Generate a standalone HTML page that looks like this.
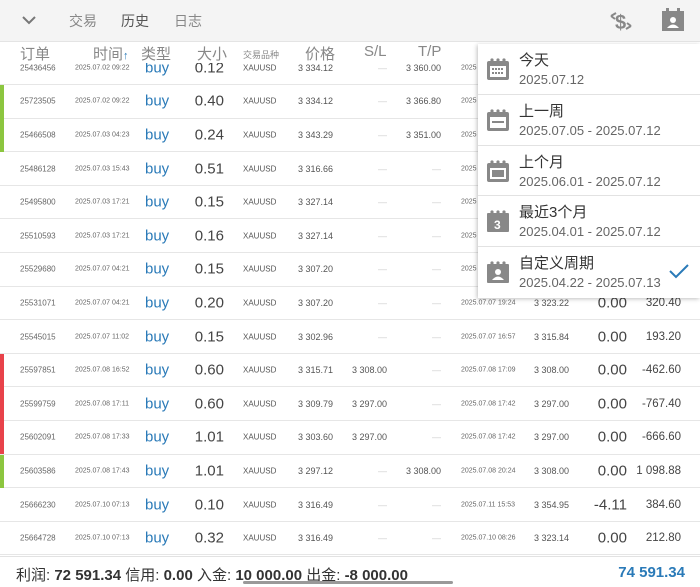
<!DOCTYPE html>
<html><head><meta charset="utf-8"><style>
*{margin:0;padding:0;box-sizing:border-box}
body{width:700px;height:587px;overflow:hidden;background:#fff;font-family:"Liberation Sans","Noto Sans CJK SC",sans-serif;color:#555;position:relative}
.top{position:absolute;left:0;top:0;width:700px;height:42px;background:#f4f4f4;border-bottom:1px solid #e4e4e4;z-index:5}
.top span{position:absolute;top:11px;font-size:14px;color:#888}
.hdr{position:absolute;left:0;top:42px;width:700px;height:21px;background:#fff;z-index:4}
.hdr span{position:absolute;top:1px;font-size:15px;color:#888;white-space:nowrap}
.row{position:absolute;left:0;width:700px;height:33.6px;border-bottom:1px solid #e6e6e6}
.row span{position:absolute;white-space:nowrap;top:50%;transform:translateY(-50%)}
.id{left:20px;font-size:8px;color:#666}
.tm{left:75px;font-size:7px;color:#666}
.ty{left:145px;font-size:15px;color:#2a7ab8}
.sz{right:476px;font-size:15px;color:#444}
.sy{left:243px;font-size:8px;color:#555}
.pr{right:367px;font-size:9px;color:#555}
.sl{right:313px;font-size:9px;color:#555}
.tp{right:259px;font-size:9px;color:#555}
.ct{left:461px;font-size:7px;color:#666}
.cp{right:131px;font-size:9px;color:#555}
.sw{right:73px;font-size:15px;color:#444}
.pf{right:19px;font-size:11.5px;color:#444}
.d{color:#ccc !important;font-size:9px}
.bar{position:absolute;left:0;width:4px}
.menu{position:absolute;left:478px;top:44px;width:222px;height:254px;background:#fff;box-shadow:-1px 1px 4px rgba(0,0,0,.25);z-index:6}
.it{position:relative;height:50.8px;border-bottom:1px solid #e2e2e2}
.it .t{position:absolute;left:41px;top:5px;font-size:15px;color:#333}
.it .dt{position:absolute;left:41px;top:28px;font-size:13px;color:#666}
.ic{position:absolute;left:8px;top:13px}
.foot{position:absolute;left:0;top:556px;width:700px;height:31px;background:#fff;border-top:1px solid #e2e2e2}
.foot span{position:absolute;top:7px;font-size:15px;color:#333;white-space:nowrap}
</style></head><body>
<div class="top">
<svg style="position:absolute;left:22px;top:15px" width="14" height="10"><path d="M1 2 L7 8 L13 2" stroke="#777" stroke-width="2" fill="none"/></svg>
<span style="left:69px">交易</span><span style="left:121px;color:#555">历史</span><span style="left:174px">日志</span>
<svg style="position:absolute;left:608px;top:8px" width="26" height="26"><text x="7" y="21" font-size="20" font-weight="bold" fill="#888" font-family="Liberation Sans">$</text><path d="M3 8 L8 5 M3 8 L7 11 M23 18 L18 21 M23 18 L19 15" stroke="#888" stroke-width="2"/></svg>
<svg style="position:absolute;left:661px;top:8px" width="24" height="24"><rect x="1" y="3" width="22" height="20" fill="#888"/><rect x="5" y="0" width="3" height="5" fill="#888"/><rect x="16" y="0" width="3" height="5" fill="#888"/><circle cx="12" cy="12" r="3" fill="#fff"/><path d="M6 20 Q12 13 18 20Z" fill="#fff"/></svg>
</div>
<div class="hdr">
<span style="left:20px">订单</span><span style="left:93px">时间<b style="color:#2a7ab8;font-size:11px">↑</b></span><span style="left:141px">类型</span><span style="left:197px">大小</span><span style="left:243px;font-size:9px;top:6px">交易品种</span><span style="left:305px">价格</span><span style="left:364px">S/L</span><span style="left:418px">T/P</span>
<svg style="position:absolute;left:127px;top:-4px" width="14" height="6"><path d="M0 6 L7 0 L14 6Z" fill="#fff"/></svg>
</div>

<div class="row" style="top:51.5px"><span class="id">25436456</span><span class="tm">2025.07.02 09:22</span><span class="ty">buy</span><span class="sz">0.12</span><span class="sy">XAUUSD</span><span class="pr">3 334.12</span><span class="sl d">—</span><span class="tp">3 360.00</span><span class="ct">2025</span></div>
<div class="row" style="top:85.1px"><span class="id">25723505</span><span class="tm">2025.07.02 09:22</span><span class="ty">buy</span><span class="sz">0.40</span><span class="sy">XAUUSD</span><span class="pr">3 334.12</span><span class="sl d">—</span><span class="tp">3 366.80</span><span class="ct">2025</span></div>
<div class="row" style="top:118.7px"><span class="id">25466508</span><span class="tm">2025.07.03 04:23</span><span class="ty">buy</span><span class="sz">0.24</span><span class="sy">XAUUSD</span><span class="pr">3 343.29</span><span class="sl d">—</span><span class="tp">3 351.00</span><span class="ct">2025</span></div>
<div class="row" style="top:152.3px"><span class="id">25486128</span><span class="tm">2025.07.03 15:43</span><span class="ty">buy</span><span class="sz">0.51</span><span class="sy">XAUUSD</span><span class="pr">3 316.66</span><span class="sl d">—</span><span class="tp d">—</span><span class="ct">2025</span></div>
<div class="row" style="top:185.9px"><span class="id">25495800</span><span class="tm">2025.07.03 17:21</span><span class="ty">buy</span><span class="sz">0.15</span><span class="sy">XAUUSD</span><span class="pr">3 327.14</span><span class="sl d">—</span><span class="tp d">—</span><span class="ct">2025</span></div>
<div class="row" style="top:219.5px"><span class="id">25510593</span><span class="tm">2025.07.03 17:21</span><span class="ty">buy</span><span class="sz">0.16</span><span class="sy">XAUUSD</span><span class="pr">3 327.14</span><span class="sl d">—</span><span class="tp d">—</span><span class="ct">2025</span></div>
<div class="row" style="top:253.1px"><span class="id">25529680</span><span class="tm">2025.07.07 04:21</span><span class="ty">buy</span><span class="sz">0.15</span><span class="sy">XAUUSD</span><span class="pr">3 307.20</span><span class="sl d">—</span><span class="tp d">—</span><span class="ct">2025</span></div>
<div class="row" style="top:286.7px"><span class="id">25531071</span><span class="tm">2025.07.07 04:21</span><span class="ty">buy</span><span class="sz">0.20</span><span class="sy">XAUUSD</span><span class="pr">3 307.20</span><span class="sl d">—</span><span class="tp d">—</span><span class="ct">2025.07.07 19:24</span><span class="cp">3 323.22</span><span class="sw">0.00</span><span class="pf">320.40</span></div>
<div class="row" style="top:320.3px"><span class="id">25545015</span><span class="tm">2025.07.07 11:02</span><span class="ty">buy</span><span class="sz">0.15</span><span class="sy">XAUUSD</span><span class="pr">3 302.96</span><span class="sl d">—</span><span class="tp d">—</span><span class="ct">2025.07.07 16:57</span><span class="cp">3 315.84</span><span class="sw">0.00</span><span class="pf">193.20</span></div>
<div class="row" style="top:353.9px"><span class="id">25597851</span><span class="tm">2025.07.08 16:52</span><span class="ty">buy</span><span class="sz">0.60</span><span class="sy">XAUUSD</span><span class="pr">3 315.71</span><span class="sl">3 308.00</span><span class="tp d">—</span><span class="ct">2025.07.08 17:09</span><span class="cp">3 308.00</span><span class="sw">0.00</span><span class="pf">-462.60</span></div>
<div class="row" style="top:387.5px"><span class="id">25599759</span><span class="tm">2025.07.08 17:11</span><span class="ty">buy</span><span class="sz">0.60</span><span class="sy">XAUUSD</span><span class="pr">3 309.79</span><span class="sl">3 297.00</span><span class="tp d">—</span><span class="ct">2025.07.08 17:42</span><span class="cp">3 297.00</span><span class="sw">0.00</span><span class="pf">-767.40</span></div>
<div class="row" style="top:421.1px"><span class="id">25602091</span><span class="tm">2025.07.08 17:33</span><span class="ty">buy</span><span class="sz">1.01</span><span class="sy">XAUUSD</span><span class="pr">3 303.60</span><span class="sl">3 297.00</span><span class="tp d">—</span><span class="ct">2025.07.08 17:42</span><span class="cp">3 297.00</span><span class="sw">0.00</span><span class="pf">-666.60</span></div>
<div class="row" style="top:454.7px"><span class="id">25603586</span><span class="tm">2025.07.08 17:43</span><span class="ty">buy</span><span class="sz">1.01</span><span class="sy">XAUUSD</span><span class="pr">3 297.12</span><span class="sl d">—</span><span class="tp">3 308.00</span><span class="ct">2025.07.08 20:24</span><span class="cp">3 308.00</span><span class="sw">0.00</span><span class="pf">1 098.88</span></div>
<div class="row" style="top:488.3px"><span class="id">25666230</span><span class="tm">2025.07.10 07:13</span><span class="ty">buy</span><span class="sz">0.10</span><span class="sy">XAUUSD</span><span class="pr">3 316.49</span><span class="sl d">—</span><span class="tp d">—</span><span class="ct">2025.07.11 15:53</span><span class="cp">3 354.95</span><span class="sw">-4.11</span><span class="pf">384.60</span></div>
<div class="row" style="top:521.9px"><span class="id">25664728</span><span class="tm">2025.07.10 07:13</span><span class="ty">buy</span><span class="sz">0.32</span><span class="sy">XAUUSD</span><span class="pr">3 316.49</span><span class="sl d">—</span><span class="tp d">—</span><span class="ct">2025.07.10 08:26</span><span class="cp">3 323.14</span><span class="sw">0.00</span><span class="pf">212.80</span></div>

<div class="bar" style="top:85px;height:67px;background:#8cc63f"></div>
<div class="bar" style="top:354px;height:100px;background:#e8424a"></div>
<div class="bar" style="top:455px;height:33px;background:#8cc63f"></div>

<div class="menu">
<div class="it"><svg class="ic" width="24" height="24"><rect x="1" y="4" width="22" height="19" rx="2" fill="#888"/><circle cx="6" cy="3" r="1.6" fill="#888"/><circle cx="12" cy="3" r="1.6" fill="#888"/><circle cx="18" cy="3" r="1.6" fill="#888"/><rect x="4" y="9" width="16" height="11" fill="#fff"/><g fill="#888"><rect x="6" y="11" width="2" height="2"/><rect x="9" y="11" width="2" height="2"/><rect x="12" y="11" width="2" height="2"/><rect x="15" y="11" width="2" height="2"/><rect x="6" y="15" width="2" height="2"/><rect x="9" y="15" width="2" height="2"/><rect x="12" y="15" width="2" height="2"/><rect x="15" y="15" width="2" height="2"/></g></svg><span class="t">今天</span><span class="dt">2025.07.12</span></div>
<div class="it"><svg class="ic" width="24" height="24"><rect x="1" y="4" width="22" height="19" rx="2" fill="#888"/><circle cx="6" cy="3" r="1.6" fill="#888"/><circle cx="12" cy="3" r="1.6" fill="#888"/><circle cx="18" cy="3" r="1.6" fill="#888"/><rect x="4" y="9" width="16" height="11" fill="#fff"/><rect x="6" y="13" width="12" height="2" fill="#888"/></svg><span class="t">上一周</span><span class="dt">2025.07.05 - 2025.07.12</span></div>
<div class="it"><svg class="ic" width="24" height="24"><rect x="1" y="4" width="22" height="19" rx="2" fill="#888"/><circle cx="6" cy="3" r="1.6" fill="#888"/><circle cx="12" cy="3" r="1.6" fill="#888"/><circle cx="18" cy="3" r="1.6" fill="#888"/><rect x="4" y="9" width="16" height="11" fill="#fff"/><rect x="6" y="11" width="12" height="7" fill="#888"/></svg><span class="t">上个月</span><span class="dt">2025.06.01 - 2025.07.12</span></div>
<div class="it"><svg class="ic" width="24" height="24"><rect x="1" y="4" width="22" height="19" rx="1" fill="#888"/><circle cx="6" cy="3" r="1.6" fill="#888"/><circle cx="12" cy="3" r="1.6" fill="#888"/><circle cx="18" cy="3" r="1.6" fill="#888"/><text x="8" y="20" font-size="12" font-weight="bold" fill="#fff" font-family="Liberation Sans">3</text></svg><span class="t">最近3个月</span><span class="dt">2025.04.01 - 2025.07.12</span></div>
<div class="it" style="border-bottom:none"><svg class="ic" width="24" height="24"><rect x="1" y="4" width="22" height="19" rx="1" fill="#888"/><circle cx="6" cy="3" r="1.6" fill="#888"/><circle cx="12" cy="3" r="1.6" fill="#888"/><circle cx="18" cy="3" r="1.6" fill="#888"/><circle cx="12" cy="12" r="3" fill="#fff"/><path d="M6 20 Q12 13 18 20Z" fill="#fff"/></svg><span class="t">自定义周期</span><span class="dt">2025.04.22 - 2025.07.13</span>
<svg style="position:absolute;left:190px;top:16px" width="22" height="16"><path d="M2 8 L8 14 L20 2" stroke="#2a7ab8" stroke-width="2" fill="none"/></svg></div>
</div>

<div class="foot">
<span style="left:16px">利润: <b>72 591.34</b>  信用: <b>0.00</b>  入金: <b>10 000.00</b>  出金: <b>-8 000.00</b></span>
<div style="position:absolute;left:243px;top:24px;width:210px;height:3px;background:#999;border-radius:2px"></div>
<span style="right:15px;top:7px;font-size:15px;font-weight:bold;color:#2a7ab8">74 591.34</span>
</div>
</body></html>
